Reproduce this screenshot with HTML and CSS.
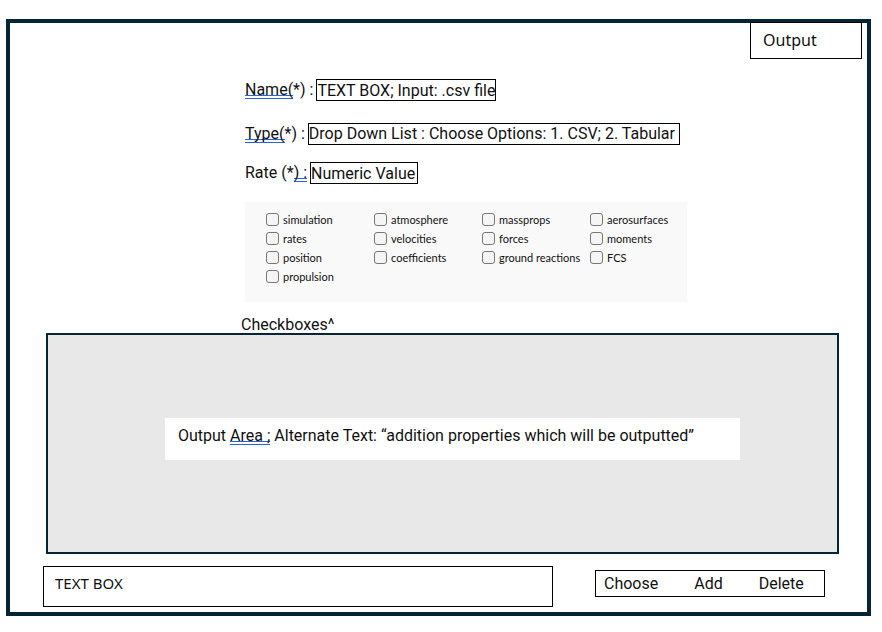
FILE: index.html
```html
<!DOCTYPE html>
<html lang="en">
<head>
<meta charset="utf-8">
<title>Output</title>
<link rel="stylesheet" href="styles.css">
</head>
<body>
<main class="frame">
  <h1 class="tab">Output</h1>
  <form class="form">
    <div class="field">
      <label for="name"><span class="marked">Name(</span>*) :</label>
      <input class="box box-name" id="name" type="text" value="TEXT BOX; Input: .csv file">
    </div>
    <div class="field">
      <label for="type"><span class="marked">Type(</span>*) :</label>
      <select class="box box-type" id="type">
        <option>Drop Down List : Choose Options: 1. CSV; 2. Tabular</option>
      </select>
    </div>
    <div class="field">
      <label for="rate">Rate (*<span class="marked">) :</span></label>
      <input class="box box-rate" id="rate" type="text" inputmode="numeric" value="Numeric Value">
    </div>
    <div class="checks">
      <label><input type="checkbox">simulation</label>
      <label><input type="checkbox">atmosphere</label>
      <label><input type="checkbox">massprops</label>
      <label><input type="checkbox">aerosurfaces</label>
      <label><input type="checkbox">rates</label>
      <label><input type="checkbox">velocities</label>
      <label><input type="checkbox">forces</label>
      <label><input type="checkbox">moments</label>
      <label><input type="checkbox">position</label>
      <label><input type="checkbox">coefficients</label>
      <label><input type="checkbox">ground reactions</label>
      <label><input type="checkbox">FCS</label>
      <label><input type="checkbox">propulsion</label>
    </div>
    <p class="caption">Checkboxes^</p>
  </form>
  <section class="output">
    <p class="message">Output <span class="marked">Area ;</span> Alternate Text: “addition properties which will be outputted”</p>
  </section>
  <footer class="footer">
    <input class="entry" type="text" aria-label="Property" value="TEXT BOX">
    <div class="actions">
      <button type="button">Choose</button>
      <button type="button">Add</button>
      <button type="button">Delete</button>
    </div>
  </footer>
</main>
</body>
</html>
```
FILE: styles.css
```css
* {
  box-sizing: border-box;
}

body {
  margin: 0;
  padding: 19px 11px 16px 6px;
  background: #fff;
  color: #111;
  font: 16px/20px Roboto, sans-serif;
}

input,
select,
button {
  font: inherit;
  color: inherit;
  margin: 0;
}

.frame {
  display: flex;
  flex-direction: column;
  border: 4px solid #032535;
}

.tab {
  align-self: flex-end;
  width: 112px;
  height: 37px;
  margin: -1px 5px 0 0;
  padding: 7px 12px;
  border: 1px solid #000;
  font-family: "Noto Sans", sans-serif;
  font-size: 16px;
  font-weight: 400;
}

.form {
  display: flex;
  flex-direction: column;
  padding: 20px 16px 0 235px;
}

.field {
  display: flex;
  align-items: center;
  gap: 3px;
  margin-bottom: 17px;
}

.field:first-child {
  margin-bottom: 22px;
}

.field label {
  white-space: nowrap;
}

/* Two thin grammar-check lines under the word */
.marked {
  background:
    linear-gradient(#2b63d9, #2b63d9) 0 100% / 100% 1px no-repeat,
    linear-gradient(#2b63d9, #2b63d9) 0 calc(100% - 3px) / 100% 1px no-repeat;
}

.box {
  height: 22px;
  padding: 0;
  border: 1px solid #000;
  border-radius: 0;
  background: #fff;
  appearance: none;
}

.box-name {
  width: 180px;
}

.box-type {
  width: 372px;
}

.box-rate {
  width: 108px;
}

.checks {
  display: grid;
  grid-template-columns: repeat(3, 108px) auto;
  grid-auto-rows: 19px;
  max-width: 442px;
  height: 100px;
  margin-top: 1px;
  padding: 8px 0 0 21px;
  background: #f9f9f9;
  font: 11px/19px Lato, sans-serif;
}

.checks label {
  display: flex;
  align-items: center;
  gap: 4px;
  white-space: nowrap;
}

.checks input {
  width: 13px;
  height: 13px;
  border: 1px solid #777;
  border-radius: 3px;
  background: #f5f5f5;
  appearance: none;
}

.checks input:checked {
  background: #777;
}

.caption {
  margin: 14px 0 0 -4px;
  line-height: 17px;
}

.output {
  display: flex;
  align-items: center;
  justify-content: center;
  height: 221px;
  margin: 0 28px 0 36px;
  border: 2px solid #032535;
  background: #e8e8e8;
}

.message {
  flex: 0 1 575px;
  min-height: 42px;
  margin: 0 0 10px 20px;
  padding: 8px 13px;
  background: #fff;
}

.footer {
  display: flex;
  align-items: flex-start;
  gap: 42px;
  margin: 12px 42px 5px 33px;
}

.entry {
  flex: 1;
  min-width: 0;
  height: 41px;
  padding: 0 11px 8px;
  border: 1px solid #000;
  background: #fff;
  font-family: "Noto Sans", sans-serif;
  font-size: 15px;
}

.actions {
  display: flex;
  gap: 36px;
  width: 230px;
  height: 27px;
  margin-top: 4px;
  padding: 0 8px;
  border: 1px solid #000;
}

.actions button {
  padding: 0;
  border: 0;
  background: none;
  cursor: pointer;
}
```
